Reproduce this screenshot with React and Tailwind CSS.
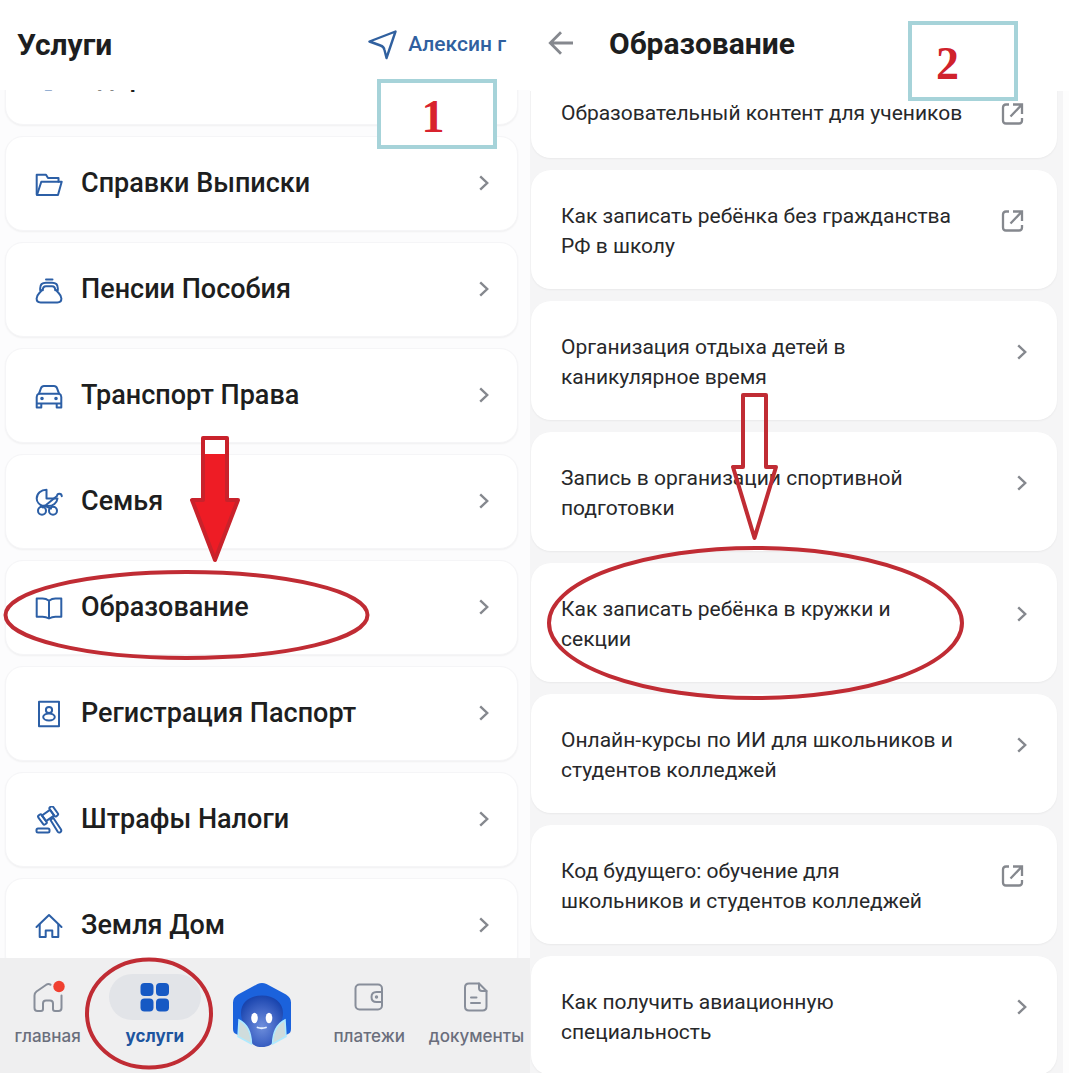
import React, { useState } from 'react';
import clsx from 'clsx';

const services = [
    { id: 'health', title: 'Здоровье' },
    { id: 'docs', title: 'Справки Выписки' },
    { id: 'pension', title: 'Пенсии Пособия' },
    { id: 'transport', title: 'Транспорт Права' },
    { id: 'family', title: 'Семья' },
    { id: 'education', title: 'Образование' },
    { id: 'passport', title: 'Регистрация Паспорт' },
    { id: 'fines', title: 'Штрафы Налоги' },
    { id: 'house', title: 'Земля Дом' },
];

const topics = [
    { title: 'Образовательный контент для учеников', external: true, single: true },
    { title: 'Как записать ребёнка без гражданства\nРФ в школу', external: true },
    { title: 'Организация отдыха детей в\nканикулярное время' },
    { title: 'Запись в организации спортивной\nподготовки' },
    { title: 'Как записать ребёнка в кружки и\nсекции' },
    { title: 'Онлайн-курсы по ИИ для школьников и\nстудентов колледжей' },
    { title: 'Код будущего: обучение для\nшкольников и студентов колледжей', external: true },
    { title: 'Как получить авиационную\nспециальность' },
];

const serviceIcons = {
    health: (
        <>
            <path d="M6 3v8a8 8 0 0 0 16 0V3" />
            <path d="M8 17v4q0 4.500 4 4.500h3q4 0 4-4.500v-4" />
        </>
    ),
    docs: (
        <>
            <path d="M1.700 24.500V4.700h9.300l2 3.300h10.500v3.700" />
            <path d="M2 25 6.300 11.700H26.700L23 25Z" />
        </>
    ),
    pension: (
        <>
            <path d="M11 3.500h6.500" />
            <path d="M5.200 14.200v-2c0-3.600 2.400-5.400 5.800-5.400h6c3.400 0 5.800 1.800 5.800 5.400v2h-2.600c0-2.600-1-3.900-3.200-3.900h-6c-2.200 0-3.200 1.300-3.200 3.900Z" />
            <path d="M6.500 14.500C4.500 17.500 1.600 18.500 1.600 22.500c0 2.700 1.500 3.900 4 3.900h16.800c2.500 0 4-1.200 4-3.900 0-4-2.900-5-4.900-8" />
        </>
    ),
    transport: (
        <>
            <path d="M4 11.700 6 6.200Q6.800 4 9 4h10q2.200 0 3 2.200l2 5.500" />
            <path d="M3.700 11.700h20.600q1.800.8 2 3.300V25.500h-4.600v-4H6.300v4H1.700V15q.2-2.500 2-3.300ZM1.700 21.500h24.600" />
            <circle cx="7" cy="16.500" r="0.800" fill="currentColor" />
            <circle cx="21" cy="16.500" r="0.800" fill="currentColor" />
        </>
    ),
    family: (
        <>
            <path d="M11.500 1.800v8.700H22.500c-.5 4.500-4.500 7.500-9.500 7.500H8C4.500 17 1.700 14 1.700 10.500 1.700 5.500 6 1.800 11.500 1.800Z" />
            <path d="M8 19.500 22 8c.3-3 4.500-3 4.800.2M9 17.500l7 3" />
            <circle cx="7" cy="22.800" r="4" />
            <circle cx="18" cy="22.800" r="4" />
        </>
    ),
    education: (
        <path d="M14 6.700Q11 4.600 7.500 4.600H1.700v18.200h5.800Q11 22.800 14 24.500q3-1.700 6.500-1.700h5.800V4.600h-5.800Q17 4.600 14 6.700V24" />
    ),
    passport: (
        <>
            <rect x="4" y="1.700" width="20" height="24.600" />
            <circle cx="14" cy="10" r="3.100" />
            <ellipse cx="14" cy="17" rx="5.800" ry="3.500" />
        </>
    ),
    fines: (
        <>
            <rect x="1.500" y="22.500" width="13" height="4" rx="1.500" />
            <g transform="rotate(-36 13 9.500)">
                <rect x="8" y="6" width="10" height="7" />
                <rect x="4" y="4" width="4.200" height="11" rx="1.600" />
                <rect x="18" y="4" width="4.200" height="11" rx="1.600" />
            </g>
            <path d="m15.500 14 2.700-2.200 7.700 11.400q1 1.900-.5 2.900-1.500.9-2.800-.5Z" />
        </>
    ),
    house: (
        <>
            <path d="M1.500 15 14 3l12.500 12" />
            <path d="M4.700 12.500V25h6v-6.500h6.600V25h6V12.500" />
        </>
    ),
};

const ServiceIcon = ({ id }) => (
    <svg viewBox="0 0 28 28" className="mt-0.5 h-7 w-7 shrink-0 text-[#2c5fa6]" fill="none" stroke="currentColor" strokeWidth="2" strokeLinejoin="round" strokeLinecap="round" aria-hidden="true">
        {serviceIcons[id]}
    </svg>
);

const Chevron = ({ className }) => (
    <svg viewBox="0 0 24 24" className={clsx('h-6 w-6 shrink-0 text-[#85888e]', className)} fill="none" stroke="currentColor" strokeWidth="2.400" aria-hidden="true">
        <path d="m8.200 5.300 7 6.700-7 6.700" />
    </svg>
);

const External = ({ className }) => (
    <svg viewBox="0 0 24 24" className={clsx('h-6 w-6 shrink-0 text-[#85888e]', className)} fill="none" stroke="currentColor" strokeWidth="2.300" aria-hidden="true">
        <path d="M8 2.500H5q-3 0-3 3v13q0 3 3 3h13q3 0 3-3V16" />
        <path d="M12 2.500h9V12M21 2.500 9.500 14.500" />
    </svg>
);

const Assistant = () => (
    <svg viewBox="0 0 60 66" className="h-[66px] w-[60px]" aria-hidden="true">
        <defs>
            <radialGradient id="face" cx="50%" cy="60%" r="60%">
                <stop offset="0" stopColor="#6f8fdc" />
                <stop offset="0.550" stopColor="#4166c6" />
                <stop offset="1" stopColor="#1a45ae" />
            </radialGradient>
        </defs>
        <path d="M25.500 2q4.500-2 9 0L54 12.500q5 3 5 8V47q0 4-3 5L43 58H17L4 52q-3-1-3-5V20.500q0-5 5-8Z" fill="#1b62dc" />
        <path d="M9 31C9 20 18 13.500 30 13.500S51 20 51 31c0 11-7 17-9 26-1 6-6 8-12 8S19 63 18 57C16 48 9 42 9 31Z" fill="url(#face)" />
        <path d="M7 38q12 6 12.500 24L6 54.500Z" fill="#cfdcdc" stroke="#aeeaff" strokeWidth="1.500" />
        <path d="M53 38q-12 6-12.500 24L54 54.500Z" fill="#cfdcdc" stroke="#aeeaff" strokeWidth="1.500" />
        <ellipse cx="22.500" cy="36" rx="3.300" ry="5.200" fill="#fff" />
        <ellipse cx="37" cy="36" rx="3.300" ry="5.200" fill="#fff" />
        <path d="M25.500 45.500q4 1.500 8.500 0" stroke="#e4efff" strokeWidth="1.800" fill="none" strokeLinecap="round" />
    </svg>
);

const navIcons = {
    main: (
        <svg viewBox="0 0 30 30" className="h-[30px] w-[30px] overflow-visible text-[#888e9a]" fill="none" stroke="currentColor" strokeWidth="2" strokeLinecap="round" strokeLinejoin="round" aria-hidden="true">
            <path d="M17.500 2.700q-2-1.200-4.200 0L3.500 9.500Q1.500 11 1.500 13.500V26q0 3 3 3H8q2 0 2-2v-5.500q0-3 3-3h4q3 0 3 3V27q0 2 2 2h3.500q3 0 3-3V13.500" />
            <circle cx="26" cy="4.500" r="5.700" fill="#f04030" stroke="none" />
        </svg>
    ),
    services: (
        <svg viewBox="0 0 30 30" className="h-[30px] w-[30px]" fill="#1659c4" aria-hidden="true">
            <rect x="0.500" y="1" width="13" height="13" rx="4" />
            <rect x="16" y="1" width="13" height="13" rx="4" />
            <rect x="0.500" y="16.500" width="13" height="13" rx="4" />
            <rect x="16" y="16.500" width="13" height="13" rx="4" />
        </svg>
    ),
    payments: (
        <svg viewBox="0 0 30 30" className="h-[30px] w-[30px] text-[#888e9a]" fill="none" stroke="currentColor" strokeWidth="2" strokeLinejoin="round" aria-hidden="true">
            <rect x="1.500" y="2.500" width="26.500" height="25" rx="4" />
            <path d="M28 10h-5.500q-5 0-5 5t5 5H28" />
            <circle cx="22.500" cy="15" r="0.700" fill="currentColor" />
        </svg>
    ),
    documents: (
        <svg viewBox="0 0 30 30" className="h-[30px] w-[30px] text-[#888e9a]" fill="none" stroke="currentColor" strokeWidth="2" strokeLinejoin="round" strokeLinecap="round" aria-hidden="true">
            <path d="M18 1.500H8q-4 0-4 4v19q0 4 4 4h13.500q4 0 4-4V9Z" />
            <path d="M18 1.500V6q0 3 3 3h4.500M10 15.500h5.500M10 21h9" />
        </svg>
    ),
};

const navItems = [
    { id: 'main', label: 'главная' },
    { id: 'services', label: 'услуги' },
    { id: 'assistant' },
    { id: 'payments', label: 'платежи' },
    { id: 'documents', label: 'документы' },
];

const ServicesPanel = () => {
    const [activeTab, setActiveTab] = useState('services');

    return (
        <section className="relative flex min-w-0 flex-[530] flex-col overflow-hidden bg-[#fcfcfd]">
            <header className="flex h-[90px] shrink-0 items-center justify-between bg-white pl-[17px] pr-6">
                <h1 className="text-[30px] font-bold leading-9">Услуги</h1>
                <button className="flex items-center gap-[11px] pb-px text-[21px] font-medium text-[#30609f]">
                    <svg viewBox="0 0 30 30" className="h-[30px] w-[30px]" fill="none" stroke="currentColor" strokeWidth="2.400" strokeLinejoin="round" aria-hidden="true">
                        <path d="M2.500 11.500 28.500 1.500 19.500 28 17.500 20Q16.800 16.500 13.500 15.500Z" />
                    </svg>
                    Алексин г
                </button>
            </header>

            <div className="min-h-0 flex-1 overflow-hidden">
                {/* list is scrolled, so the first card sits partly under the header */}
                <ul className="-mt-[60px] flex flex-col gap-[11px] pl-[5px] pr-3">
                    {services.map((item) => (
                        <li key={item.id}>
                            <button className="flex w-full items-center gap-[18px] rounded-[18px] border border-[#f5f5f7] bg-white pb-[29px] pl-[29px] pr-[21px] pt-7 text-left shadow-xs">
                                <ServiceIcon id={item.id} />
                                <span className="flex-1 text-[27px] font-medium leading-9">{item.title}</span>
                                <Chevron />
                            </button>
                        </li>
                    ))}
                </ul>
            </div>

            <nav className="h-[115px] shrink-0 bg-[#efeff0]">
                <div className="-ml-[6px] flex items-start pt-4">
                    {navItems.map((item) => {
                        const active = activeTab === item.id;
                        return (
                            <button
                                key={item.id}
                                aria-label={item.label || 'ассистент'}
                                onClick={() => setActiveTab(item.id)}
                                className="flex flex-1 flex-col items-center gap-1"
                            >
                                {item.id === 'assistant' ? (
                                    <span className="pt-2"><Assistant /></span>
                                ) : (
                                    <>
                                        <span className={clsx('flex h-[46px] w-[92px] items-center justify-center rounded-full', active && 'bg-[#e2e4e8]')}>
                                            {navIcons[item.id]}
                                        </span>
                                        <span className={clsx('font-[Inter,sans-serif] text-[17px] leading-6', active ? 'font-bold text-[#1d559f]' : 'font-medium text-[#6a6e7c]')}>
                                            {item.label}
                                        </span>
                                    </>
                                )}
                            </button>
                        );
                    })}
                </div>
            </nav>

            <div className="absolute left-[377px] top-[79px] flex h-[70px] w-[120px] items-center justify-center border-4 border-[#a6d3d9] bg-white pr-2 pt-1 font-['Liberation_Serif',serif] text-[46px] font-bold text-[#d8232e]">
                1
            </div>
            <svg className="pointer-events-none absolute left-0 top-0" width="530" height="1073" fill="none" stroke="#c02c34" strokeWidth="4" strokeLinejoin="round" aria-hidden="true">
                <ellipse cx="186.500" cy="615" rx="181" ry="43" />
                <ellipse cx="149" cy="1013.500" rx="62" ry="54" />
                <path d="M203 438h24v62h11l-23 60-23-60h11Z" fill="#ee1c25" stroke="#c9222b" />
                <path d="M205 440h20v14h-20Z" fill="#fff" stroke="none" />
            </svg>
        </section>
    );
};

const EducationPanel = () => (
    <section className="relative flex min-w-0 flex-[539] flex-col overflow-hidden bg-[#fdfdfd]">
        <header className="flex h-[91px] shrink-0 items-center gap-[35px] bg-white pb-1 pl-[18px]">
            <button aria-label="Назад" className="text-[#85888e]">
                <svg viewBox="0 0 26 26" className="h-[26px] w-[26px]" fill="none" stroke="currentColor" strokeWidth="2.800" aria-hidden="true">
                    <path d="M25 12H2.500M13 1.200 2.300 12 13 22.800" />
                </svg>
            </button>
            <h2 className="text-[30px] font-bold leading-9">Образование</h2>
        </header>

        <div className="mr-[6px] min-h-0 flex-1 overflow-hidden bg-[#f5f5f6]">
            <ul className="-mt-6 flex flex-col gap-3 pl-px pr-[6px]">
                {topics.map((topic) => (
                    <li key={topic.title}>
                        <button
                            className={clsx(
                                'flex w-full items-start justify-between rounded-[20px] bg-white pl-[30px] pr-8 pt-[31px] text-left shadow-xs',
                                topic.single ? 'pb-[30px]' : 'pb-7'
                            )}
                        >
                            <span className="whitespace-pre-line text-[21px] leading-[30px] text-[#27282a]">{topic.title}</span>
                            {topic.external ? (
                                <External className={topic.single ? 'mt-1' : 'mt-2'} />
                            ) : (
                                <Chevron className="-mr-[9px] mt-2" />
                            )}
                        </button>
                    </li>
                ))}
            </ul>
        </div>

        <div className="absolute left-[378px] top-[21px] flex h-[80px] w-[110px] items-center border-4 border-[#a6d3d9] bg-white pl-6 pt-1 font-['Liberation_Serif',serif] text-[46px] font-bold text-[#d0222c]">
            2
        </div>
        <svg className="pointer-events-none absolute left-0 top-0" width="539" height="1073" fill="none" stroke="#c02c34" strokeWidth="4" strokeLinejoin="round" aria-hidden="true">
            <ellipse cx="225.500" cy="623" rx="206.500" ry="75" />
            <path d="M213 395h23v72h10l-21.500 71L203 467h10Z" />
        </svg>
    </section>
);

const App = () => (
    <main className="flex h-screen w-full overflow-hidden bg-white font-[Roboto,sans-serif] text-[#1d1e20]">
        <ServicesPanel />
        <EducationPanel />
    </main>
);

export default App;
